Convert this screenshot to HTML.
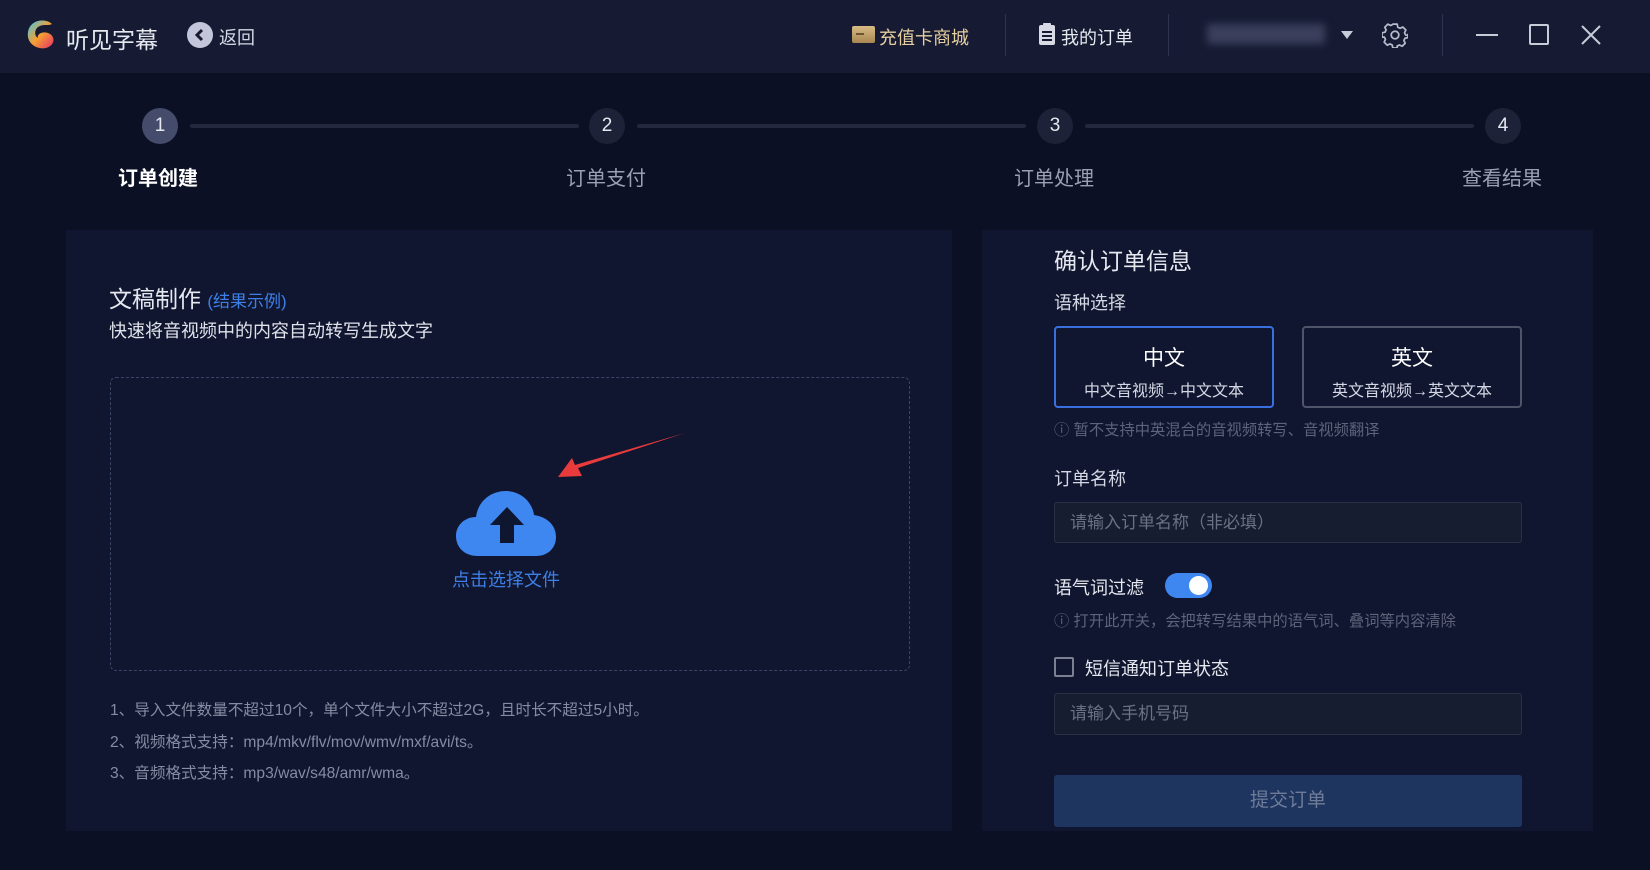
<!DOCTYPE html>
<html><head><meta charset="utf-8"><style>
*{margin:0;padding:0;box-sizing:border-box}
body{width:1650px;height:870px;background:#0b1024;font-family:"Liberation Sans","Noto Sans CJK SC",sans-serif;color:#e6e8ef;position:relative;overflow:hidden}
.a{position:absolute;white-space:nowrap}
.hdr{position:absolute;left:0;top:0;width:1650px;height:73px;background:#161b33}
.sep{position:absolute;top:14px;width:1px;height:42px;background:#2e3450}
.circ{position:absolute;width:36px;height:36px;border-radius:50%;background:#1d2238;color:#e6e8ef;font-size:19px;line-height:36px;text-align:center}
.line{position:absolute;top:124px;height:4px;background:#23283f;border-radius:2px}
.lbl{position:absolute;top:162px;font-size:20px;color:#9aa0b4;transform:translateX(-50%)}
.panel{position:absolute;background:#101630}
.card{position:absolute;top:326px;width:220px;height:82px;border-radius:4px;text-align:center}
.input{position:absolute;left:1054px;width:468px;background:#171d30;border:1px solid #2b3145;border-radius:3px;color:#6b7185;font-size:17px;padding-left:15px}
.hint{position:absolute;left:1054px;font-size:15.3px;color:#5d6378}
.note{position:absolute;left:110px;font-size:15.6px;color:#858ba0}
</style></head><body>
<div class="hdr"></div>
<svg class="a" style="left:26px;top:18px" width="30" height="32" viewBox="0 0 30 32">
<defs><linearGradient id="g1" x1="0" y1="0" x2="1" y2="1"><stop offset="0" stop-color="#3cc8f0"/><stop offset="0.5" stop-color="#f5a030"/><stop offset="1" stop-color="#e8306a"/></linearGradient></defs>
<path d="M26 6 C20 0 4 1 2 14 C0 26 12 32 20 30 C28 28 30 20 24 16 C18 12 10 16 12 20 C8 18 8 10 14 8 C18 6 22 8 26 6Z" fill="url(#g1)"/></svg>
<div class="a" style="left:66px;top:21px;font-size:23px;color:#e6e8ef">听见字幕</div>
<div class="a" style="left:187px;top:22px;width:26px;height:26px;border-radius:50%;background:#c3c6db"></div>
<svg class="a" style="left:187px;top:22px" width="26" height="26"><path d="M15 8 L10 13 L15 18" stroke="#161b33" stroke-width="3" fill="none"/></svg>
<div class="a" style="left:219px;top:24px;font-size:18px;color:#d5d8e4">返回</div>
<div class="a" style="left:852px;top:26px;width:23px;height:17px;background:linear-gradient(#d8bb85,#a88650);border-radius:2px"></div>
<div class="a" style="left:856px;top:33px;width:8px;height:2px;background:#6b5430"></div>
<div class="a" style="left:879px;top:24px;font-size:18px;color:#e6cfa0">充值卡商城</div>
<div class="sep" style="left:1005px"></div>
<svg class="a" style="left:1038px;top:22px" width="18" height="24"><rect x="1" y="3" width="16" height="20" rx="2" fill="#d8dae6"/><rect x="5" y="1" width="8" height="4" rx="1" fill="#d8dae6"/><path d="M4 10h10M4 14h10M4 18h10" stroke="#161b33" stroke-width="2"/></svg>
<div class="a" style="left:1061px;top:24px;font-size:18px;color:#e6e8ef">我的订单</div>
<div class="sep" style="left:1168px"></div>
<div class="a" style="left:1207px;top:24px;width:118px;height:20px;background:#3a3f5c;filter:blur(4px)"></div>
<svg class="a" style="left:1340px;top:30px" width="14" height="10"><path d="M1 1h12L7 9z" fill="#c8cbd8"/></svg>
<svg class="a" style="left:1382px;top:22px" width="26" height="26" viewBox="0 0 24 24"><path d="M10 2h4l.6 2.8 2 1 2.6-1.2 2.8 2.8-1.2 2.6 1 2L24 12.6v-1.2 3l-2.8.6-1 2 1.2 2.6-2.8 2.8-2.6-1.2-2 1L14 24h-4l-.6-2.8-2-1-2.6 1.2-2.8-2.8 1.2-2.6-1-2L0 14v-4l2.8-.6 1-2-1.2-2.6 2.8-2.8 2.6 1.2 2-1z" fill="none" stroke="#b8bbcc" stroke-width="1.6" stroke-linejoin="round"/><circle cx="12" cy="12" r="3.5" fill="none" stroke="#b8bbcc" stroke-width="1.6"/></svg>
<div class="sep" style="left:1442px"></div>
<div class="a" style="left:1476px;top:34px;width:22px;height:2px;background:#c8cbd8"></div>
<div class="a" style="left:1529px;top:24px;width:20px;height:21px;border:2px solid #c8cbd8;border-radius:2px"></div>
<svg class="a" style="left:1580px;top:24px" width="22" height="22"><path d="M2 2L20 20M20 2L2 20" stroke="#c8cbd8" stroke-width="2"/></svg>

<div class="line" style="left:190px;width:389px"></div>
<div class="line" style="left:637px;width:389px"></div>
<div class="line" style="left:1085px;width:389px"></div>
<div class="circ" style="left:142px;top:108px;background:#454b6b">1</div>
<div class="circ" style="left:589px;top:108px">2</div>
<div class="circ" style="left:1037px;top:108px">3</div>
<div class="circ" style="left:1485px;top:108px">4</div>
<div class="lbl" style="left:158px;color:#fff;font-weight:bold">订单创建</div>
<div class="lbl" style="left:606px">订单支付</div>
<div class="lbl" style="left:1054px">订单处理</div>
<div class="lbl" style="left:1502px">查看结果</div>

<div class="panel" style="left:66px;top:230px;width:886px;height:601px"></div>
<div class="panel" style="left:982px;top:230px;width:611px;height:601px"></div>

<div class="a" style="left:109px;top:280px;font-size:23px;color:#e6e8ef">文稿制作 <span style="font-size:17px;color:#3d7fe6">(结果示例)</span></div>
<div class="a" style="left:109px;top:317px;font-size:18px;color:#e0e2ea">快速将音视频中的内容自动转写生成文字</div>
<div class="a" style="left:110px;top:377px;width:800px;height:294px;border:1px dashed #3a4566;border-radius:6px"></div>
<svg class="a" style="left:456px;top:489px" width="102" height="68" viewBox="0 0 102 68"><path d="M22 67 C8 67 0 58 0 47 C0 36 9 28 20 28 C22 12 35 2 50 2 C64 2 76 12 78 26 C92 28 100 37 100 48 C100 59 92 67 80 67Z" fill="#3f87f0"/><path d="M51 18 L68 36 L58 36 L58 54 L44 54 L44 36 L34 36Z" fill="#0f1630"/></svg>
<div class="a" style="left:452px;top:566px;font-size:18px;color:#3d7fe6">点击选择文件</div>
<svg class="a" style="left:550px;top:430px" width="140" height="52"><path d="M135 3 L28 38 L32 46 L8 47 L22 28 L25 35 Z" fill="#e93b3b"/></svg>
<div class="note" style="top:698px">1、导入文件数量不超过10个，单个文件大小不超过2G，且时长不超过5小时。</div>
<div class="note" style="top:730px">2、视频格式支持：mp4/mkv/flv/mov/wmv/mxf/avi/ts。</div>
<div class="note" style="top:761px">3、音频格式支持：mp3/wav/s48/amr/wma。</div>

<div class="a" style="left:1054px;top:242px;font-size:23px;color:#e6e8ef">确认订单信息</div>
<div class="a" style="left:1054px;top:289px;font-size:18px;color:#d5d8e4">语种选择</div>
<div class="card" style="left:1054px;border:2px solid #3a6fe0"><div style="font-size:21px;margin-top:14px;color:#fff">中文</div><div style="font-size:16px;margin-top:5px;color:#d5d8e4">中文音视频→中文文本</div></div>
<div class="card" style="left:1302px;border:2px solid #4f5468"><div style="font-size:21px;margin-top:14px;color:#fff">英文</div><div style="font-size:16px;margin-top:5px;color:#d5d8e4">英文音视频→英文文本</div></div>
<div class="hint" style="top:418px">ⓘ 暂不支持中英混合的音视频转写、音视频翻译</div>
<div class="a" style="left:1054px;top:465px;font-size:18px;color:#d5d8e4">订单名称</div>
<div class="input" style="top:502px;height:41px;line-height:39px">请输入订单名称（非必填）</div>
<div class="a" style="left:1054px;top:574px;font-size:18px;color:#e6e8ef">语气词过滤</div>
<div class="a" style="left:1165px;top:573px;width:47px;height:25px;border-radius:13px;background:#3f87f0"></div>
<div class="a" style="left:1189px;top:576px;width:19px;height:19px;border-radius:50%;background:#fff"></div>
<div class="hint" style="top:609px">ⓘ 打开此开关，会把转写结果中的语气词、叠词等内容清除</div>
<div class="a" style="left:1054px;top:657px;width:20px;height:20px;border:2px solid #7a7f92;border-radius:2px"></div>
<div class="a" style="left:1085px;top:655px;font-size:18px;color:#e6e8ef">短信通知订单状态</div>
<div class="input" style="top:693px;height:42px;line-height:40px">请输入手机号码</div>
<div class="a" style="left:1054px;top:775px;width:468px;height:52px;background:#1e3560;border-radius:3px;color:#6f7c99;font-size:19px;line-height:52px;text-align:center">提交订单</div>
</body></html>
